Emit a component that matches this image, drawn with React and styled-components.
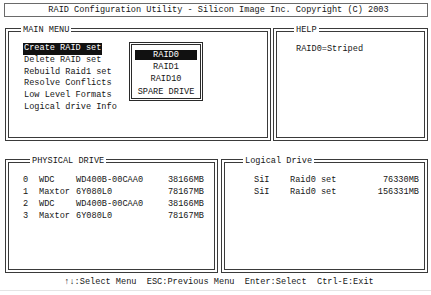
import React from 'react';
import styled, { createGlobalStyle } from 'styled-components';

const GlobalStyle = createGlobalStyle`
  html, body {
    margin: 0;
    padding: 0;
    background: #fff;
  }
  body {
    font-family: "Liberation Mono", "DejaVu Sans Mono", monospace;
    font-size: 8.6px;
    color: #161616;
  }
`;

const menuItems = [
  'Create RAID set',
  'Delete RAID set',
  'Rebuild Raid1 set',
  'Resolve Conflicts',
  'Low Level Formats',
  'Logical drive Info',
];

const raidLevels = ['RAID0', 'RAID1', 'RAID10', 'SPARE DRIVE'];

const physicalDrives = [
  { id: 0, vendor: 'WDC', model: 'WD400B-00CAA0', size: '38166MB' },
  { id: 1, vendor: 'Maxtor', model: '6Y080L0', size: '78167MB' },
  { id: 2, vendor: 'WDC', model: 'WD400B-00CAA0', size: '38166MB' },
  { id: 3, vendor: 'Maxtor', model: '6Y080L0', size: '78167MB' },
];

const logicalDrives = [
  { vendor: 'SiI', name: 'Raid0 set', size: '76330MB' },
  { vendor: 'SiI', name: 'Raid0 set', size: '156331MB' },
];

function App() {
  return (
    <Screen>
      <GlobalStyle />
      <TitleBar>RAID Configuration Utility - Silicon Image Inc. Copyright (C) 2003</TitleBar>

      <TopRow>
        <Panel>
          <Legend offset={12}>MAIN MENU</Legend>
          <MenuBody>
            <MenuList>
              {menuItems.map((item, i) => (
                <MenuItem key={item} active={i === 0}>{item}</MenuItem>
              ))}
            </MenuList>
            <Popup>
              {raidLevels.map((level, i) => (
                <PopupItem key={level} active={i === 0}>{level}</PopupItem>
              ))}
            </Popup>
          </MenuBody>
        </Panel>

        <Panel>
          <Legend offset={17}>HELP</Legend>
          <HelpBody>RAID0=Striped</HelpBody>
        </Panel>
      </TopRow>

      <BottomRow>
        <Panel>
          <Legend offset={21}>PHYSICAL DRIVE</Legend>
          <PhysicalTable>
            {physicalDrives.map(d => (
              <React.Fragment key={d.id}>
                <span>{d.id}</span>
                <span>{d.vendor}</span>
                <span>{d.model}</span>
                <Size>{d.size}</Size>
              </React.Fragment>
            ))}
          </PhysicalTable>
        </Panel>

        <Panel>
          <Legend offset={18}>Logical Drive</Legend>
          <LogicalTable>
            {logicalDrives.map((d, i) => (
              <React.Fragment key={i}>
                <span>{d.vendor}</span>
                <span>{d.name}</span>
                <Size>{d.size}</Size>
              </React.Fragment>
            ))}
          </LogicalTable>
        </Panel>
      </BottomRow>

      <Footer>↑↓:Select Menu  ESC:Previous Menu  Enter:Select  Ctrl-E:Exit</Footer>
    </Screen>
  );
}

const Screen = styled.div`
  width: 431px;
  height: 295px;
  overflow: hidden;
  display: flex;
  flex-direction: column;
`;

const TitleBar = styled.div`
  margin: 3px 3px 0 4px;
  height: 12px;
  line-height: 12px;
  border: 1px solid #6a6a6a;
  text-align: center;
  padding-left: 5px;
  white-space: pre;
`;

const TopRow = styled.div`
  display: grid;
  grid-template-columns: 266px 155px;
  gap: 2px;
  margin: 7px 0 0 5px;
  height: 117px;
`;

const BottomRow = styled.div`
  display: grid;
  grid-template-columns: 213px 207px;
  gap: 3px;
  margin: 14px 0 0 5px;
  height: 118px;
`;

const Panel = styled.fieldset`
  margin: 0;
  padding: 0;
  min-width: 0;
  border: 4px double #3a3a3a;
  box-sizing: border-box;
`;

const Legend = styled.legend`
  margin-left: ${p => p.offset}px;
  padding: 0 2px;
  line-height: 12px;
  height: 12px;
`;

const MenuBody = styled.div`
  display: flex;
  align-items: flex-start;
  padding: 6px 0 0 14px;
`;

const MenuList = styled.div`
  width: 106px;
  padding-top: 1px;
  display: flex;
  flex-direction: column;
`;

const MenuItem = styled.div`
  align-self: flex-start;
  height: 11.8px;
  line-height: 11.8px;
  padding: 0 1px;
  white-space: pre;
  background: ${p => (p.active ? '#111' : 'transparent')};
  color: ${p => (p.active ? '#fff' : 'inherit')};
`;

const Popup = styled.div`
  width: 74px;
  height: 59px;
  box-sizing: border-box;
  border: 3px double #2a2a2a;
  padding: 5px 3px 0;
  display: flex;
  flex-direction: column;
  gap: 2.2px;
`;

const PopupItem = styled.div`
  height: 10px;
  line-height: 10px;
  text-align: center;
  white-space: pre;
  background: ${p => (p.active ? '#111' : 'transparent')};
  color: ${p => (p.active ? '#fff' : 'inherit')};
`;

const HelpBody = styled.div`
  padding: 7px 0 0 19px;
  line-height: 12px;
`;

const PhysicalTable = styled.div`
  display: grid;
  grid-template-columns: 16px 37px 1fr auto;
  grid-auto-rows: 12px;
  line-height: 12px;
  padding: 7px 10px 0 14px;
  white-space: pre;
`;

const LogicalTable = styled.div`
  display: grid;
  grid-template-columns: 36px 1fr auto;
  grid-auto-rows: 12px;
  line-height: 12px;
  padding: 7px 5px 0 29px;
  white-space: pre;
`;

const Size = styled.span`
  text-align: right;
`;

const Footer = styled.div`
  margin-top: 3px;
  height: 12px;
  line-height: 12px;
  padding: 0 0 2px 7px;
  text-align: center;
  white-space: pre;
  border-bottom: 1px solid #e4e4e4;
`;

export default App;
